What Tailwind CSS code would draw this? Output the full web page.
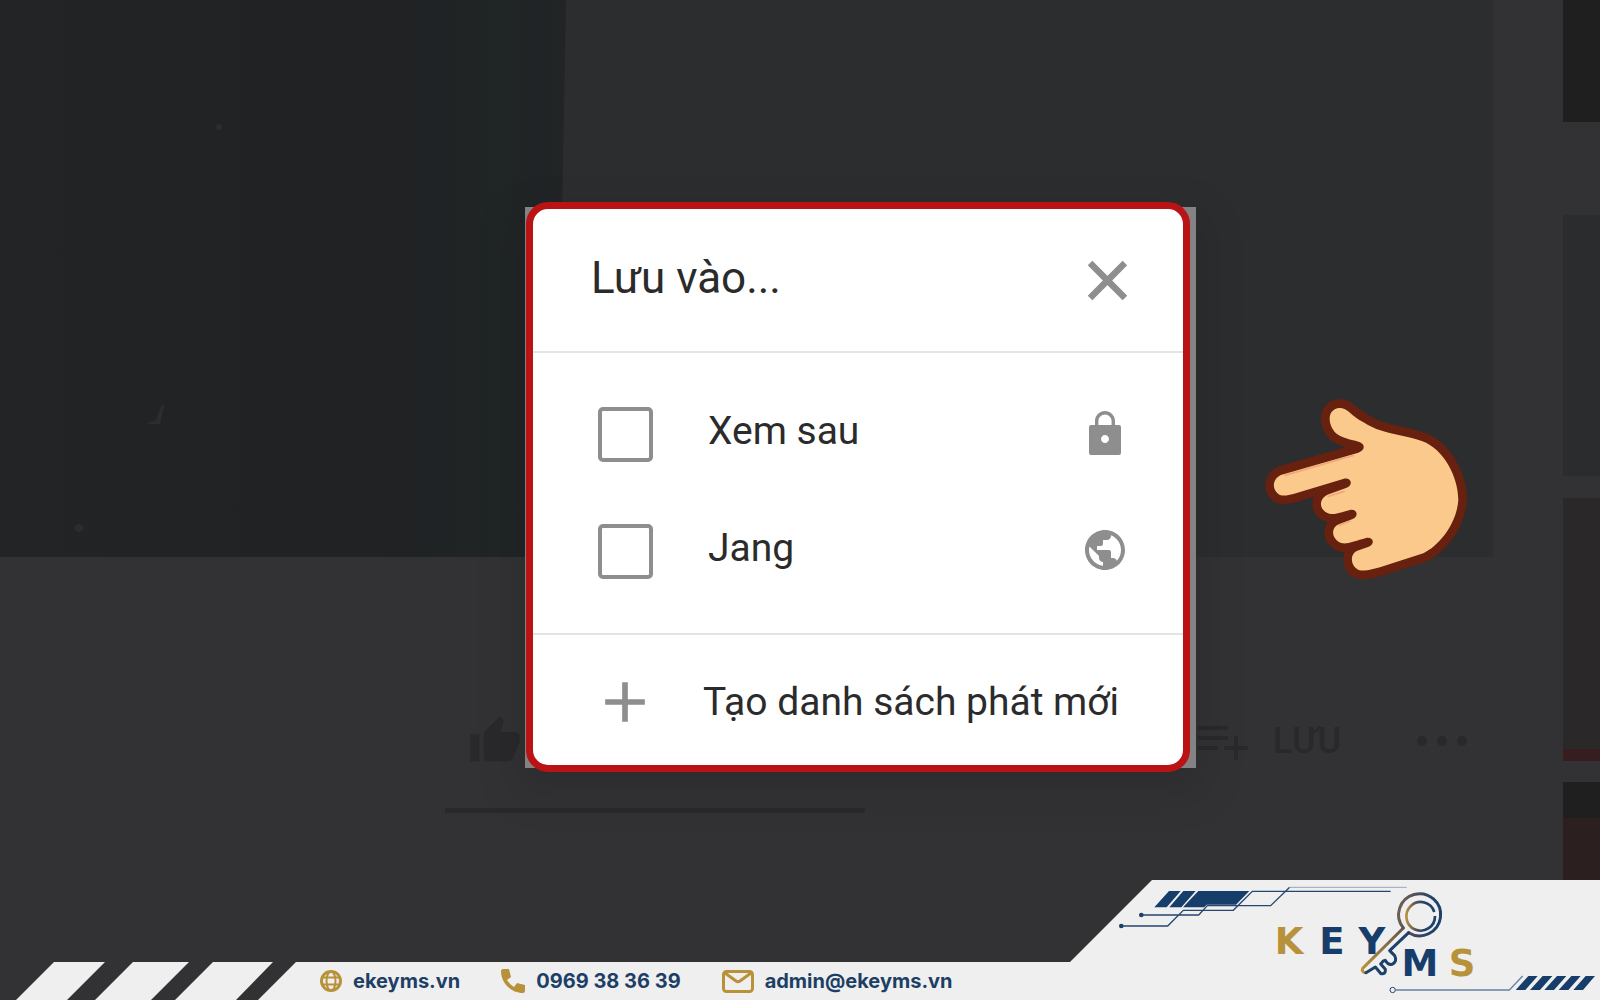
<!DOCTYPE html>
<html lang="vi">
<head>
<meta charset="utf-8">
<meta name="viewport" content="width=device-width, initial-scale=1">
<title>Lưu vào danh sách phát</title>
<script src="https://cdn.jsdelivr.net/npm/@tailwindcss/browser@4"></script>
</head>
<body class="bg-[#323234] font-['Roboto',sans-serif]">
<div class="relative min-h-screen overflow-hidden">

  <!-- Dimmed video page -->
  <main class="flex gap-[70px]">
    <section class="min-w-0 flex-1">
      <div class="h-[557px] bg-[#2c2d2e]">
        <svg class="h-full w-[566px]" viewBox="0 0 566 557" aria-hidden="true">
          <defs>
            <linearGradient id="curtain" x1="0" x2="1" y1="0" y2="0">
              <stop offset="0" stop-color="#222426"/><stop offset=".7" stop-color="#202224"/><stop offset=".88" stop-color="#202526"/><stop offset="1" stop-color="#222426"/>
            </linearGradient>
          </defs>
          <path fill="url(#curtain)" d="M0 0H566L556 557H0Z"/>
          <g fill="#2b2d2f"><circle cx="219" cy="127" r="3"/><circle cx="79" cy="528" r="4"/><path d="M146 424l10-4 6-16 2 2-4 18z"/></g>
        </svg>
      </div>
      <div class="mt-[159px] flex h-[50px] items-center pr-6 pl-[468px] text-[#29292b]">
        <svg class="h-[54px] w-[54px]" viewBox="0 0 24 24" fill="currentColor" aria-hidden="true"><path d="M1 21h4V9H1v12zm22-11c0-1.1-.9-2-2-2h-6.3l1-4.600v-.3c0-.4-.2-.8-.4-1.100L14.200 1 7.600 7.600C7.200 8 7 8.500 7 9v10c0 1.100.9 2 2 2h9c.8 0 1.500-.5 1.800-1.200l3-7.100c.1-.2.200-.5.200-.7z"/></svg>
        <div class="ml-auto flex items-center">
          <svg class="mr-5 h-[60px] w-[60px]" viewBox="0 0 24 24" fill="currentColor" aria-hidden="true"><path d="M14 10H2v1.500h12zm0-4H2v1.500h12zm4 8v-4h-1.500v4h-4v1.500h4v4H18v-4h4V14zM2 15.500h8V14H2z"/></svg>
          <span class="text-[36px] leading-[50px] font-medium">LƯU</span>
          <svg class="ml-[74px] h-3 w-[54px]" viewBox="0 0 54 12" fill="currentColor" aria-hidden="true"><circle cx="7" cy="6" r="5"/><circle cx="27" cy="6" r="5"/><circle cx="47" cy="6" r="5"/></svg>
        </div>
      </div>
      <div class="mt-[42px] ml-[445px] h-[5px] w-[420px] bg-[#29292b]"></div>
    </section>
    <aside class="w-[37px] shrink-0">
      <div class="h-[122px] bg-[#1f1f1f]"></div>
      <div class="mt-[93px] h-[261px] bg-[#2b2c2e]"></div>
      <div class="mt-[22px] h-[263px] border-b-12 border-[#361e20] bg-[#2a2829]"></div>
      <div class="mt-[21px] h-[110px] border-t-36 border-[#1f1f1f] bg-[#2c1f20]"></div>
    </aside>
  </main>

  <!-- Save dialog -->
  <div class="absolute inset-0 flex items-start justify-center pt-[202px] pl-[116px]">
    <div class="relative">
      <div class="absolute top-[5px] -right-[6px] bottom-1 -left-px bg-[#848282] shadow-[0_16px_40px_10px_rgba(0,0,0,0.10)]"></div>
      <section role="dialog" aria-labelledby="dialog-title" class="relative w-[664px] rounded-[22px] border-7 border-[#b91315] bg-white text-[#2b2b2b]">
        <header class="flex h-[144px] items-center justify-between border-b-2 border-[#e4e4e4] pr-[43px] pl-[58px]">
          <h1 id="dialog-title" class="pb-1 text-[44px] leading-[50px]">Lưu vào...</h1>
          <button type="button" aria-label="Đóng" class="text-[#8e8e8e]">
            <svg class="h-[65px] w-[65px]" viewBox="0 0 24 24" fill="currentColor" stroke="currentColor" stroke-width=".4" aria-hidden="true"><path d="M19 6.410L17.590 5 12 10.590 6.410 5 5 6.410 10.590 12 5 17.590 6.410 19 12 13.410 17.590 19 19 17.590 13.410 12z"/></svg>
          </button>
        </header>
        <div class="border-b-2 border-[#e4e4e4] pt-[23px] pr-[54px] pb-[23px] pl-[65px]">
          <div class="flex h-[117px] items-center">
            <input id="watch-later" type="checkbox" class="h-[55px] w-[55px] appearance-none rounded-[5px] border-4 border-[#8e8e8e]">
            <label for="watch-later" class="ml-[55px] flex-1 pb-2 text-[39px] leading-[48px]">Xem sau</label>
            <svg class="mb-1 h-12 w-12 text-[#8e8e8e]" viewBox="0 0 24 24" fill="currentColor" role="img" aria-label="Riêng tư"><path fill-rule="evenodd" d="M19 8h-2V6c0-2.760-2.240-5-5-5S7 3.240 7 6v2H5q-1 0-1 1v13q0 1 1 1h14q1 0 1-1V9q0-1-1-1zm-7 9c-1.100 0-2-.900-2-2s.900-2 2-2 2 .900 2 2-.900 2-2 2zM15.300 8H8.700V6c0-1.820 1.480-3.300 3.300-3.300s3.300 1.480 3.300 3.300v2z"/></svg>
          </div>
          <div class="flex h-[117px] items-center">
            <input id="jang" type="checkbox" class="h-[55px] w-[55px] appearance-none rounded-[5px] border-4 border-[#8e8e8e]">
            <label for="jang" class="ml-[55px] flex-1 pb-2 text-[39px] leading-[48px]">Jang</label>
            <svg class="mb-1 h-12 w-12 text-[#8e8e8e]" viewBox="0 0 24 24" fill="currentColor" role="img" aria-label="Công khai"><path d="M12 2C6.480 2 2 6.480 2 12s4.480 10 10 10 10-4.480 10-10S17.520 2 12 2zm-1 17.930c-3.950-.490-7-3.850-7-7.930 0-.620.080-1.210.210-1.790L9 15v1c0 1.100.900 2 2 2v1.930zm6.900-2.540c-.260-.810-1-1.390-1.900-1.390h-1v-3c0-.550-.450-1-1-1H8v-2h2c.550 0 1-.450 1-1V7h2c1.100 0 2-.900 2-2v-.410c2.930 1.190 5 4.060 5 7.410 0 2.080-.800 3.970-2.100 5.390z"/></svg>
          </div>
        </div>
        <button type="button" class="flex h-[130px] w-full items-center gap-11 pt-1 pl-[58px] text-left text-[39px] leading-[48px]">
          <svg class="h-[68px] w-[68px] text-[#8e8e8e]" viewBox="0 0 24 24" fill="currentColor" aria-hidden="true"><path d="M19 13h-6v6h-2v-6H5v-2h6V5h2v6h6z"/></svg>
          <span class="whitespace-nowrap">Tạo danh sách phát mới</span>
        </button>
      </section>

      <!-- Pointing hand -->
      <svg class="absolute top-[178px] left-[714px] h-[220px] w-[260px]" viewBox="0 0 780 660" aria-hidden="true">
        <path fill="#fbc98b" stroke="#68200f" stroke-width="52" stroke-linejoin="round" paint-order="stroke" d="M330 98C312 80 286 78 273 98 262 120 275 150 292 163 315 178 340 180 358 186 378 194 374 212 355 218L125 284C95 295 95 332 118 344 130 349 145 346 160 342L312 296C336 292 340 318 318 324L262 344C232 360 240 394 268 401 284 405 300 398 330 390 352 386 358 410 336 418L298 432C268 444 276 482 308 490 324 492 350 482 378 474 402 470 406 494 384 501L350 513C328 524 332 560 356 570 378 576 400 566 420 562L550 520C600 495 650 430 655 360 655 290 610 205 545 183 490 163 430 160 395 140 365 125 345 112 330 98Z"/>
        <path fill="none" stroke="#e8946c" stroke-linecap="round" stroke-width="5" opacity=".6" d="M135 286L340 226M265 349L312 334M298 436L330 424"/>
      </svg>
    </div>
  </div>

  <!-- Contact banner -->
  <footer class="absolute inset-x-0 bottom-0 flex items-end font-['Inter',sans-serif]">
    <svg class="h-[38px] w-[296px] shrink-0" viewBox="0 0 296 38" fill="#efefef" aria-hidden="true"><path d="M54 0H105L67 38H16ZM133 0H189L151 38H95ZM213 0H273L236 38H175ZM296 0V38H258Z"/></svg>
    <address class="flex h-[38px] flex-1 items-center gap-[41px] bg-[#efefef] pl-6 text-[20px] leading-6 font-bold whitespace-nowrap text-[#1d3f66] not-italic">
      <a href="https://ekeyms.vn" class="flex items-center gap-[11px]">
        <svg class="h-[22px] w-[22px]" viewBox="0 0 22 22" fill="none" stroke="#b8923a" stroke-width="3" aria-hidden="true"><circle cx="11" cy="11" r="9.500"/><ellipse cx="11" cy="11" rx="4.500" ry="9.500" stroke-width="2"/><path d="M2 7.500h18M2 14.500h18" stroke-width="2"/></svg>
        ekeyms.vn</a>
      <a href="tel:0969383639" class="flex items-center gap-[11px]">
        <svg class="h-6 w-6" viewBox="0 0 24 24" fill="#b8923a" aria-hidden="true"><path d="M2 0h6l2 8-4 3c2 3 4 5 7 7l3-4 8 2v6c0 1-1 2-2 2C10 24 0 14 0 2 0 1 1 0 2 0z"/></svg>
        0969 38 36 39</a>
      <a href="mailto:admin@ekeyms.vn" class="flex items-center gap-[11px]">
        <svg class="h-[23px] w-8" viewBox="0 0 32 23" fill="none" stroke="#b8923a" stroke-width="3" stroke-linejoin="round" aria-hidden="true"><rect x="1.500" y="1.500" width="29" height="20" rx="3"/><path d="M3 3l11 8q2 1.500 4 0L29 3"/></svg>
        admin@ekeyms.vn</a>
    </address>
    <svg class="h-[120px] w-[530px] shrink-0" viewBox="0 0 530 120" role="img" aria-label="KEYMS">
      <defs>
        <linearGradient id="key" gradientUnits="userSpaceOnUse" x1="900" y1="130" x2="1010" y2="150">
          <stop offset="0" stop-color="#6b5d55"/><stop offset=".4" stop-color="#4a4c58"/><stop offset=".9" stop-color="#1d416b"/>
        </linearGradient>
        <linearGradient id="ring" gradientUnits="userSpaceOnUse" x1="915" y1="140" x2="975" y2="140">
          <stop offset="0" stop-color="#c39a3f"/><stop offset=".5" stop-color="#5d5355"/><stop offset="1" stop-color="#1d416b"/>
        </linearGradient>
        <linearGradient id="shaft" gradientUnits="userSpaceOnUse" x1="790" y1="300" x2="910" y2="170">
          <stop offset="0" stop-color="#b8923a"/><stop offset="1" stop-color="#625554"/>
        </linearGradient>
      </defs>
      <path fill="#efefef" d="M82 0H530V120H0V82Z"/>
      <g transform="translate(30 -10) scale(.33333)">
        <g fill="#173e6b">
          <path d="M207 63H242L200 112H163ZM250 63H287L244 112H208ZM295 63H448L408 104H320L312 112H249Z"/>
          <path d="M1285 318H1313L1276 360H1247ZM1328 318H1357L1320 360H1290ZM1371 318H1399L1362 360H1333ZM1414 318H1442L1405 360H1376ZM1457 318H1485L1449 360H1420Z"/>
          <circle cx="64" cy="168" r="7"/><circle cx="124" cy="135" r="7"/>
        </g>
        <g fill="none" stroke="#26466d" stroke-width="4">
          <path d="M64 168H203L250 121H400L457 64H872M124 135H296L322 107H512L569 52"/>
          <path stroke="#a7b3c1" d="M569 52H920"/>
          <path stroke="#6683a3" d="M888 360H1228L1268 318"/>
          <circle cx="878" cy="360" r="8" stroke-width="3"/>
        </g>
        <g fill="none" stroke-width="9" stroke-linejoin="round" stroke-linecap="round">
          <path stroke="url(#key)" d="M910 174A63 63 0 1 1 926 188"/>
          <path stroke="url(#ring)" stroke-width="8" stroke-linecap="butt" d="M1003 126A43 43 0 1 0 1005 138"/>
          <path stroke="url(#shaft)" d="M910 174L788 295Q784 304 794 308"/>
          <path stroke="#1d416b" d="M926 188L869 242L884 257Q893 274 876 283Q864 286 856 271L850 273L842 282L856 298Q858 313 843 311L826 291L798 308"/>
        </g>
      </g>
      <g font-family="'DejaVu Sans', sans-serif" font-weight="700" font-size="37" text-anchor="middle" fill="#173e6b">
        <text x="219" y="74" fill="#b8923a">K</text><text x="262" y="74">E</text><text x="302" y="74">Y</text>
        <text x="350" y="96">M</text><text x="392" y="96" fill="#b8923a">S</text>
      </g>
    </svg>
  </footer>
</div>
</body>
</html>
